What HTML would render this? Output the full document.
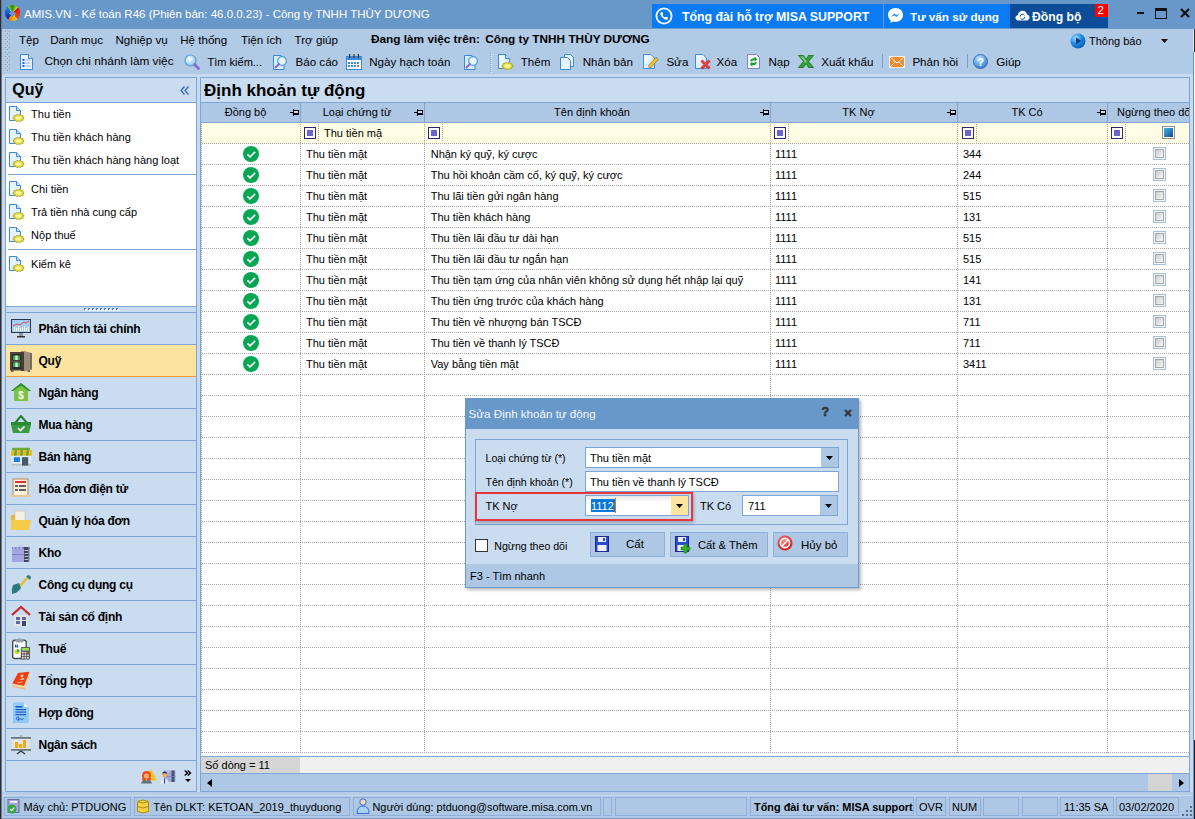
<!DOCTYPE html>
<html><head><meta charset="utf-8"><style>
html,body{margin:0;padding:0;width:1195px;height:819px;overflow:hidden;background:#b5cde7;}
body{position:relative;font-family:"Liberation Sans",sans-serif;}
.a{position:absolute;}
.t{white-space:nowrap;line-height:1;}
svg{overflow:visible;}
</style></head><body>
<div class="a" style="left:0px;top:0px;width:1195px;height:819px;background:#b5cde7"></div>
<div class="a" style="left:0px;top:0px;width:1195px;height:29px;background:#6897c9"></div>
<div class="a" style="left:0px;top:0px;width:1px;height:819px;background:#2d2d2d"></div>
<div class="a" style="left:1px;top:0px;width:1px;height:819px;background:#6a7a90"></div>
<div class="a" style="left:1193px;top:29px;width:1px;height:23px;background:#dce8f4"></div>
<div class="a" style="left:1194px;top:29px;width:1px;height:23px;background:#2d2d2d"></div>
<div class="a" style="left:1193px;top:52px;width:1px;height:767px;background:#6a90c8"></div>
<div class="a" style="left:1194px;top:52px;width:1px;height:688px;background:#f0f4f8"></div>
<div class="a" style="left:1194px;top:740px;width:1px;height:79px;background:#202030"></div>
<div class="a" style="left:4.7px;top:5.4px;width:15.6px;height:15.6px;border-radius:50%;background:conic-gradient(#1a8a20 0deg,#c8e020 45deg,#e80c0c 45deg,#e85010 140deg,#f8d010 140deg,#f07010 215deg,#0a2aa0 215deg,#2a80e0 320deg,#98d020 320deg,#1a8a20 360deg)"></div>
<div class="a" style="left:10.2px;top:10.7px;width:5px;height:5px;background:#6897c9;transform:rotate(45deg)"></div>
<div class="a t " style="left:24px;top:9.27px;font-size:11.5px;font-weight:normal;color:#fff;">AMIS.VN - Kế toán R46 (Phiên bản: 46.0.0.23) - Công ty TNHH THÙY DƯƠNG</div>
<div class="a" style="left:652px;top:4px;width:231px;height:24px;background:#0b7bf4"></div>
<div class="a" style="left:883px;top:4px;width:1px;height:24px;background:#5aa0e8"></div>
<div class="a" style="left:884px;top:4px;width:126px;height:24px;background:#0b7bf4"></div>
<div class="a" style="left:1010px;top:4px;width:98px;height:24px;background:#0b4d99"></div>
<div class="a" style="left:1095px;top:4px;width:13px;height:13px;background:#ff0000"></div>
<div class="a t " style="left:1097.5px;top:5.27px;font-size:11.5px;font-weight:normal;color:#fff;">2</div>
<svg class="a" style="left:655px;top:7px;" width="18" height="18" viewBox="0 0 18 18"><circle cx="9" cy="9" r="7.6" fill="none" stroke="#fff" stroke-width="1.8"/><path d="M6 5.2 L7.4 5 L8.3 7.2 L7.4 8 Q8.2 9.8 10 10.6 L10.8 9.7 L13 10.6 L12.8 12 Q11.5 13.2 9.5 12.2 Q6.3 10.7 5.4 7.6 Q5.2 6 6 5.2 Z" fill="#fff"/></svg>
<div class="a t " style="left:682px;top:10.59px;font-size:12.3px;font-weight:bold;color:#fff;">Tổng đài hỗ trợ MISA SUPPORT</div>
<svg class="a" style="left:887px;top:7px;" width="17" height="17" viewBox="0 0 17 17"><path d="M8.5 1 C4 1 1 4.2 1 8 C1 10.2 2 12 3.6 13.2 L3.6 16 L6.2 14.6 C7 14.8 7.7 14.9 8.5 14.9 C13 14.9 16 11.8 16 8 C16 4.2 13 1 8.5 1 Z" fill="#fff"/><path d="M3.8 10 L7.3 6.4 L9.2 8.3 L12.8 6.4 L9.3 10 L7.4 8.2 Z" fill="#0b7bf4"/></svg>
<div class="a t " style="left:910px;top:11.10px;font-size:11.7px;font-weight:bold;color:#fff;">Tư vấn sử dụng</div>
<svg class="a" style="left:1015px;top:10px;" width="15" height="11" viewBox="0 0 15 11"><path d="M3.5 10.5 C1.6 10.5 0.5 9.3 0.5 7.8 C0.5 6.4 1.5 5.3 2.9 5.2 C3.3 2.6 5.2 0.8 7.5 0.8 C9.8 0.8 11.6 2.4 12 4.6 C13.5 4.8 14.5 6 14.5 7.6 C14.5 9.2 13.3 10.5 11.6 10.5 Z" fill="#fff"/><path d="M5.3 6.5 A2.3 2.3 0 0 1 9.5 5.2 M9.7 7 A2.3 2.3 0 0 1 5.5 8.3" fill="none" stroke="#0b4d99" stroke-width="1"/></svg>
<div class="a t " style="left:1032px;top:10.67px;font-size:12.2px;font-weight:bold;color:#fff;">Đồng bộ</div>
<div class="a" style="left:1137px;top:12px;width:7px;height:2px;background:#111"></div>
<div class="a" style="left:1155px;top:8px;width:12px;height:11px;border:1.5px solid #111;border-top-width:3px;box-sizing:border-box"></div>
<svg class="a" style="left:1180px;top:8px;" width="10" height="10" viewBox="0 0 10 10"><path d="M1 1 L9 9 M9 1 L1 9" stroke="#111" stroke-width="2.2"/></svg>
<div class="a" style="left:2px;top:29px;width:1191px;height:45px;background:#b1cae6"></div>
<div class="a" style="left:1190px;top:74px;width:3px;height:721px;background:#c8daf0"></div>
<div class="a" style="left:2px;top:74px;width:1191px;height:721px;background:#c8daf0"></div>
<svg class="a" style="left:0px;top:0px;" width="12" height="80" viewBox="0 0 12 80"><rect x="5" y="31" width="1" height="1" fill="#a89a8c"/><rect x="9" y="31" width="1" height="1" fill="#a89a8c"/><rect x="7" y="33" width="1" height="1" fill="#a89a8c"/><rect x="5" y="35" width="1" height="1" fill="#a89a8c"/><rect x="9" y="35" width="1" height="1" fill="#a89a8c"/><rect x="7" y="37" width="1" height="1" fill="#a89a8c"/><rect x="5" y="39" width="1" height="1" fill="#a89a8c"/><rect x="9" y="39" width="1" height="1" fill="#a89a8c"/><rect x="7" y="41" width="1" height="1" fill="#a89a8c"/><rect x="5" y="43" width="1" height="1" fill="#a89a8c"/><rect x="9" y="43" width="1" height="1" fill="#a89a8c"/><rect x="7" y="45" width="1" height="1" fill="#a89a8c"/><rect x="5" y="47" width="1" height="1" fill="#a89a8c"/><rect x="9" y="47" width="1" height="1" fill="#a89a8c"/><rect x="7" y="49" width="1" height="1" fill="#a89a8c"/><rect x="5" y="52" width="1" height="1" fill="#a89a8c"/><rect x="9" y="52" width="1" height="1" fill="#a89a8c"/><rect x="7" y="54" width="1" height="1" fill="#a89a8c"/><rect x="5" y="56" width="1" height="1" fill="#a89a8c"/><rect x="9" y="56" width="1" height="1" fill="#a89a8c"/><rect x="7" y="58" width="1" height="1" fill="#a89a8c"/><rect x="5" y="60" width="1" height="1" fill="#a89a8c"/><rect x="9" y="60" width="1" height="1" fill="#a89a8c"/><rect x="7" y="62" width="1" height="1" fill="#a89a8c"/><rect x="5" y="64" width="1" height="1" fill="#a89a8c"/><rect x="9" y="64" width="1" height="1" fill="#a89a8c"/><rect x="7" y="66" width="1" height="1" fill="#a89a8c"/><rect x="5" y="68" width="1" height="1" fill="#a89a8c"/><rect x="9" y="68" width="1" height="1" fill="#a89a8c"/><rect x="7" y="70" width="1" height="1" fill="#a89a8c"/></svg>
<div class="a t " style="left:19px;top:34.18px;font-size:11.6px;font-weight:normal;color:#000;">Tệp</div>
<div class="a t " style="left:50.2px;top:34.18px;font-size:11.6px;font-weight:normal;color:#000;">Danh mục</div>
<div class="a t " style="left:115.5px;top:34.18px;font-size:11.6px;font-weight:normal;color:#000;">Nghiệp vụ</div>
<div class="a t " style="left:180.2px;top:34.18px;font-size:11.6px;font-weight:normal;color:#000;">Hệ thống</div>
<div class="a t " style="left:241px;top:34.18px;font-size:11.6px;font-weight:normal;color:#000;">Tiện ích</div>
<div class="a t " style="left:294.6px;top:34.18px;font-size:11.6px;font-weight:normal;color:#000;">Trợ giúp</div>
<div class="a t " style="left:371px;top:34.01px;font-size:11.8px;font-weight:bold;color:#000;">Đang làm việc trên:</div>
<div class="a t " style="left:485.2px;top:34.01px;font-size:11.8px;font-weight:bold;color:#000;">Công ty TNHH THÙY DƯƠNG</div>
<svg class="a" style="left:1070px;top:33px;" width="16" height="16" viewBox="0 0 16 16"><defs><radialGradient id="gb" cx="0.35" cy="0.3" r="0.8"><stop offset="0" stop-color="#9fdcff"/><stop offset="0.5" stop-color="#1e8ae0"/><stop offset="1" stop-color="#0a4fa8"/></radialGradient></defs><circle cx="8" cy="8" r="7.5" fill="url(#gb)"/><path d="M6 4.5 L11.5 8 L6 11.5 Z" fill="#0a3f90"/></svg>
<div class="a t " style="left:1089px;top:36.19px;font-size:11px;font-weight:normal;color:#000;">Thông báo</div>
<svg class="a" style="left:1161px;top:39px;" width="7" height="4" viewBox="0 0 7 4"><path d="M0 0 H7 L3.5 4 Z" fill="#111"/></svg>
<svg class="a" style="left:19px;top:54px;" width="15" height="16" viewBox="0 0 15 16"><path d="M1.5 0.5 H9.5 L13.5 4.5 V15.5 H1.5 Z" fill="#e8f3fc" stroke="#3a8ad8" stroke-width="1"/><path d="M9.5 0.5 V4.5 H13.5" fill="#c8e0f6" stroke="#3a8ad8" stroke-width="1"/><rect x="3.5" y="5" width="2" height="2" fill="#1a6ad0"/><rect x="3.5" y="8" width="2" height="2" fill="#1a6ad0"/><rect x="3.5" y="11" width="2" height="2" fill="#1a6ad0"/><rect x="6.5" y="5.5" width="5" height="1" fill="#8ab8e8"/><rect x="6.5" y="8.5" width="5" height="1" fill="#8ab8e8"/><rect x="6.5" y="11.5" width="5" height="1" fill="#8ab8e8"/></svg>
<div class="a t " style="left:44.4px;top:56.01px;font-size:11.8px;font-weight:normal;color:#000;">Chọn chi nhánh làm việc</div>
<svg class="a" style="left:184px;top:54px;" width="16" height="16" viewBox="0 0 16 16"><defs><radialGradient id="mg" cx="0.4" cy="0.35" r="0.7"><stop offset="0" stop-color="#ffffff"/><stop offset="1" stop-color="#7cc0f0"/></radialGradient></defs><circle cx="6.5" cy="6.5" r="5.5" fill="url(#mg)" stroke="#5aa0d8" stroke-width="1.2"/><path d="M10.5 10.5 L14.5 14.5" stroke="#8a6ad0" stroke-width="2.8" stroke-linecap="round"/></svg>
<div class="a t " style="left:207.6px;top:56.69px;font-size:11px;font-weight:normal;color:#000;letter-spacing:0px">Tìm kiếm...</div>
<svg class="a" style="left:272px;top:54px;" width="16" height="16" viewBox="0 0 16 16"><path d="M1.5 1.5 H9 L12 4.5 V15.5 H1.5 Z" fill="#d8ecfc" stroke="#3a8ad8"/><circle cx="10" cy="7" r="4.3" fill="#e8f6ff" stroke="#4a9ae0" stroke-width="1.2"/><path d="M7 10 L3.5 13.5" stroke="#8a6ad0" stroke-width="2" stroke-linecap="round"/></svg>
<div class="a t " style="left:295.5px;top:56.18px;font-size:11.6px;font-weight:normal;color:#000;">Báo cáo</div>
<svg class="a" style="left:346px;top:54px;" width="16" height="15" viewBox="0 0 16 15"><rect x="0.5" y="2.5" width="15" height="13" fill="#fff" stroke="#3a8ad8"/><rect x="0.5" y="2.5" width="15" height="3.5" fill="#3a8ad8"/><rect x="3" y="0" width="1.2" height="4" fill="#333"/><rect x="7.4" y="0" width="1.2" height="4" fill="#333"/><rect x="11.8" y="0" width="1.2" height="4" fill="#333"/><g fill="#3a8ad8"><rect x="2" y="8" width="2" height="2"/><rect x="5" y="8" width="2" height="2"/><rect x="8" y="8" width="2" height="2"/><rect x="11" y="8" width="2" height="2"/><rect x="2" y="11" width="2" height="2"/><rect x="5" y="11" width="2" height="2"/><rect x="8" y="11" width="2" height="2"/><rect x="11" y="11" width="2" height="2" fill="#e05a20"/></g></svg>
<div class="a t " style="left:369.2px;top:56.18px;font-size:11.6px;font-weight:normal;color:#000;">Ngày hạch toán</div>
<svg class="a" style="left:463px;top:54px;" width="16" height="16" viewBox="0 0 16 16"><path d="M1.5 1.5 H9 L12 4.5 V15.5 H1.5 Z" fill="#d8ecfc" stroke="#3a8ad8"/><circle cx="10" cy="7" r="4.3" fill="#e8f6ff" stroke="#4a9ae0" stroke-width="1.2"/><path d="M7 10 L3.5 13.5" stroke="#8a6ad0" stroke-width="2" stroke-linecap="round"/></svg>
<svg class="a" style="left:490px;top:53px;" width="2" height="20" viewBox="0 0 2 20"><rect x="0" y="0" width="1" height="1" fill="#a0a8b8"/><rect x="1" y="1" width="1" height="1" fill="#e8f0f8"/><rect x="0" y="2" width="1" height="1" fill="#a0a8b8"/><rect x="1" y="3" width="1" height="1" fill="#e8f0f8"/><rect x="0" y="4" width="1" height="1" fill="#a0a8b8"/><rect x="1" y="5" width="1" height="1" fill="#e8f0f8"/><rect x="0" y="6" width="1" height="1" fill="#a0a8b8"/><rect x="1" y="7" width="1" height="1" fill="#e8f0f8"/><rect x="0" y="8" width="1" height="1" fill="#a0a8b8"/><rect x="1" y="9" width="1" height="1" fill="#e8f0f8"/><rect x="0" y="10" width="1" height="1" fill="#a0a8b8"/><rect x="1" y="11" width="1" height="1" fill="#e8f0f8"/><rect x="0" y="12" width="1" height="1" fill="#a0a8b8"/><rect x="1" y="13" width="1" height="1" fill="#e8f0f8"/><rect x="0" y="14" width="1" height="1" fill="#a0a8b8"/><rect x="1" y="15" width="1" height="1" fill="#e8f0f8"/><rect x="0" y="16" width="1" height="1" fill="#a0a8b8"/><rect x="1" y="17" width="1" height="1" fill="#e8f0f8"/><rect x="0" y="18" width="1" height="1" fill="#a0a8b8"/><rect x="1" y="19" width="1" height="1" fill="#e8f0f8"/></svg>
<svg class="a" style="left:498px;top:54px;" width="17" height="16" viewBox="0 0 17 16"><path d="M0.5 0.5 H7.5 L11.5 4.5 V14.5 H0.5 Z" fill="#e6f2fc" stroke="#3a8ad8"/><path d="M7.5 0.5 V4.5 H11.5" fill="#c8e0f6" stroke="#3a8ad8"/><polygon points="15.30,12.00 13.80,12.92 14.19,14.23 12.16,14.40 11.29,15.61 9.50,14.96 7.71,15.61 6.84,14.40 4.81,14.23 5.20,12.92 3.70,12.00 5.20,11.08 4.81,9.77 6.84,9.60 7.71,8.39 9.50,9.04 11.29,8.39 12.16,9.60 14.19,9.77 13.80,11.08" fill="#e8e040" stroke="#a09020" stroke-width="0.7"/><ellipse cx="9.5" cy="12" rx="2.90" ry="1.71" fill="#f8f8a0"/></svg>
<div class="a t " style="left:520.7px;top:56.18px;font-size:11.6px;font-weight:normal;color:#000;">Thêm</div>
<svg class="a" style="left:560px;top:54px;" width="14" height="16" viewBox="0 0 14 16"><path d="M4.5 0.5 H10.5 L13.5 3.5 V12.5 H4.5 Z" fill="#e6f2fc" stroke="#3a8ad8"/><path d="M0.5 3.5 H7.5 L10.5 6.5 V15.5 H0.5 Z" fill="#e6f2fc" stroke="#3a8ad8"/></svg>
<div class="a t " style="left:582.7px;top:56.18px;font-size:11.6px;font-weight:normal;color:#000;">Nhân bản</div>
<svg class="a" style="left:643px;top:54px;" width="16" height="15" viewBox="0 0 16 15"><defs><linearGradient id="dg" x1="0" y1="0" x2="1" y2="1"><stop offset="0" stop-color="#ffffff"/><stop offset="1" stop-color="#c4e0f8"/></linearGradient></defs><path d="M0.5 0.5 H8 L11.5 4 V14.5 H0.5 Z" fill="url(#dg)" stroke="#3a90e0"/><path d="M6.3 13.8 L5.8 11.2 L12.8 3.4 L15.2 5.5 L8.2 13.3 Z" fill="#f2c434" stroke="#7a6010" stroke-width="0.6"/></svg>
<div class="a t " style="left:666.4px;top:56.18px;font-size:11.6px;font-weight:normal;color:#000;">Sửa</div>
<svg class="a" style="left:695px;top:54px;" width="16" height="16" viewBox="0 0 16 16"><path d="M0.5 0.5 H8 L11.5 4 V14.5 H0.5 Z" fill="url(#dg)" stroke="#3a90e0"/><path d="M6.5 6.5 L14.5 14.5 M14.5 6.5 L6.5 14.5" stroke="#d82828" stroke-width="2.8"/><path d="M7 6.5 L14 13.5 M14 6.5 L7 13.5" stroke="#f07878" stroke-width="0.8"/></svg>
<div class="a t " style="left:716.6px;top:56.18px;font-size:11.6px;font-weight:normal;color:#000;">Xóa</div>
<svg class="a" style="left:747px;top:54px;" width="14" height="16" viewBox="0 0 14 16"><path d="M0.5 0.5 H9.5 L12.5 3.5 V14.5 H0.5 Z" fill="#f2f6fc" stroke="#7c88c0"/><path d="M3.2 7.2 Q3.5 4.3 6.8 4.3 L7.6 4.3 L7.6 2.6 L10.2 5.3 L7.6 8 L7.6 6.3 L6.8 6.3 Q5.3 6.3 5.2 7.2 Z" fill="#18a030"/><path d="M9.8 8.2 Q9.5 11.1 6.2 11.1 L5.4 11.1 L5.4 12.8 L2.8 10.1 L5.4 7.4 L5.4 9.1 L6.2 9.1 Q7.7 9.1 7.8 8.2 Z" fill="#18a030"/></svg>
<div class="a t " style="left:768.5px;top:56.18px;font-size:11.6px;font-weight:normal;color:#000;">Nạp</div>
<svg class="a" style="left:798px;top:55px;" width="16" height="13" viewBox="0 0 16 13"><path d="M0.5 0.5 H5.5 L8 4.5 L10.5 0.5 H15.5 L10.5 6.5 L15.5 12.5 H10.5 L8 8.5 L5.5 12.5 H0.5 L5.5 6.5 Z" fill="#34a234" stroke="#1a6a1a" stroke-width="0.8"/><path d="M2.5 1.5 H5 L9 7 L7.5 8 Z" fill="#90d890" opacity="0.8"/></svg>
<div class="a t " style="left:821.2px;top:56.18px;font-size:11.6px;font-weight:normal;color:#000;">Xuất khẩu</div>
<div class="a" style="left:882px;top:54px;width:1px;height:14px;background:#7aa0d0"></div>
<svg class="a" style="left:889px;top:56px;" width="16" height="12" viewBox="0 0 16 12"><rect x="0.5" y="0.5" width="15" height="11" fill="#f58a28" stroke="#fff" stroke-width="0.8"/><path d="M0.5 0.5 L8 7 L15.5 0.5 M0.5 11.5 L6 6 M15.5 11.5 L10 6" fill="none" stroke="#fff" stroke-width="1"/></svg>
<div class="a t " style="left:912.4px;top:56.18px;font-size:11.6px;font-weight:normal;color:#000;">Phản hồi</div>
<div class="a" style="left:967px;top:54px;width:1px;height:14px;background:#7aa0d0"></div>
<svg class="a" style="left:973px;top:54px;" width="15" height="15" viewBox="0 0 15 15"><defs><radialGradient id="hg" cx="0.4" cy="0.3" r="0.8"><stop offset="0" stop-color="#c8e8ff"/><stop offset="0.6" stop-color="#5aa0e8"/><stop offset="1" stop-color="#2a6ac8"/></radialGradient></defs><circle cx="7.5" cy="7.5" r="7" fill="url(#hg)" stroke="#2a5aa8" stroke-width="0.8"/><text x="7.5" y="12" text-anchor="middle" font-family="Liberation Sans" font-weight="bold" font-size="11" fill="#fff">?</text></svg>
<div class="a t " style="left:996.3px;top:56.18px;font-size:11.6px;font-weight:normal;color:#000;">Giúp</div>
<div class="a" style="left:5px;top:77px;width:192px;height:715px;background:#cadcf0;border:1px solid #7fa5d5;box-sizing:border-box"></div>
<div class="a t " style="left:12.2px;top:81.96px;font-size:16px;font-weight:bold;color:#000;">Quỹ</div>
<svg class="a" style="left:180px;top:86px;" width="10" height="9" viewBox="0 0 10 9"><path d="M4.5 0.5 L1 4.5 L4.5 8.5 M8.5 0.5 L5 4.5 L8.5 8.5" fill="none" stroke="#3a6ab0" stroke-width="1.3"/></svg>
<div class="a" style="left:6px;top:102px;width:190px;height:204px;background:#fff;border-top:1px solid #7fa5d5;box-sizing:border-box"></div>
<svg class="a" style="left:9px;top:105.5px;" width="17" height="16" viewBox="0 0 17 16"><path d="M0.5 0.5 H7.5 L11.5 4.5 V14.5 H0.5 Z" fill="#e6f2fc" stroke="#3a8ad8"/><path d="M7.5 0.5 V4.5 H11.5" fill="#c8e0f6" stroke="#3a8ad8"/><polygon points="15.30,12.00 13.80,12.92 14.19,14.23 12.16,14.40 11.29,15.61 9.50,14.96 7.71,15.61 6.84,14.40 4.81,14.23 5.20,12.92 3.70,12.00 5.20,11.08 4.81,9.77 6.84,9.60 7.71,8.39 9.50,9.04 11.29,8.39 12.16,9.60 14.19,9.77 13.80,11.08" fill="#e8e040" stroke="#a09020" stroke-width="0.7"/><ellipse cx="9.5" cy="12" rx="2.90" ry="1.71" fill="#f8f8a0"/></svg>
<div class="a t " style="left:31.1px;top:108.69px;font-size:11px;font-weight:normal;color:#000;">Thu tiền</div>
<svg class="a" style="left:9px;top:128.5px;" width="17" height="16" viewBox="0 0 17 16"><path d="M0.5 0.5 H7.5 L11.5 4.5 V14.5 H0.5 Z" fill="#e6f2fc" stroke="#3a8ad8"/><path d="M7.5 0.5 V4.5 H11.5" fill="#c8e0f6" stroke="#3a8ad8"/><polygon points="15.30,12.00 13.80,12.92 14.19,14.23 12.16,14.40 11.29,15.61 9.50,14.96 7.71,15.61 6.84,14.40 4.81,14.23 5.20,12.92 3.70,12.00 5.20,11.08 4.81,9.77 6.84,9.60 7.71,8.39 9.50,9.04 11.29,8.39 12.16,9.60 14.19,9.77 13.80,11.08" fill="#e8e040" stroke="#a09020" stroke-width="0.7"/><ellipse cx="9.5" cy="12" rx="2.90" ry="1.71" fill="#f8f8a0"/></svg>
<div class="a t " style="left:31.1px;top:131.69px;font-size:11px;font-weight:normal;color:#000;">Thu tiền khách hàng</div>
<svg class="a" style="left:9px;top:151.5px;" width="17" height="16" viewBox="0 0 17 16"><path d="M0.5 0.5 H7.5 L11.5 4.5 V14.5 H0.5 Z" fill="#e6f2fc" stroke="#3a8ad8"/><path d="M7.5 0.5 V4.5 H11.5" fill="#c8e0f6" stroke="#3a8ad8"/><polygon points="15.30,12.00 13.80,12.92 14.19,14.23 12.16,14.40 11.29,15.61 9.50,14.96 7.71,15.61 6.84,14.40 4.81,14.23 5.20,12.92 3.70,12.00 5.20,11.08 4.81,9.77 6.84,9.60 7.71,8.39 9.50,9.04 11.29,8.39 12.16,9.60 14.19,9.77 13.80,11.08" fill="#e8e040" stroke="#a09020" stroke-width="0.7"/><ellipse cx="9.5" cy="12" rx="2.90" ry="1.71" fill="#f8f8a0"/></svg>
<div class="a t " style="left:31.1px;top:154.69px;font-size:11px;font-weight:normal;color:#000;">Thu tiền khách hàng hàng loạt</div>
<svg class="a" style="left:9px;top:180.5px;" width="17" height="16" viewBox="0 0 17 16"><path d="M0.5 0.5 H7.5 L11.5 4.5 V14.5 H0.5 Z" fill="#e6f2fc" stroke="#3a8ad8"/><path d="M7.5 0.5 V4.5 H11.5" fill="#c8e0f6" stroke="#3a8ad8"/><polygon points="15.30,12.00 13.80,12.92 14.19,14.23 12.16,14.40 11.29,15.61 9.50,14.96 7.71,15.61 6.84,14.40 4.81,14.23 5.20,12.92 3.70,12.00 5.20,11.08 4.81,9.77 6.84,9.60 7.71,8.39 9.50,9.04 11.29,8.39 12.16,9.60 14.19,9.77 13.80,11.08" fill="#e8e040" stroke="#a09020" stroke-width="0.7"/><ellipse cx="9.5" cy="12" rx="2.90" ry="1.71" fill="#f8f8a0"/></svg>
<div class="a t " style="left:31.1px;top:183.69px;font-size:11px;font-weight:normal;color:#000;">Chi tiền</div>
<svg class="a" style="left:9px;top:203.5px;" width="17" height="16" viewBox="0 0 17 16"><path d="M0.5 0.5 H7.5 L11.5 4.5 V14.5 H0.5 Z" fill="#e6f2fc" stroke="#3a8ad8"/><path d="M7.5 0.5 V4.5 H11.5" fill="#c8e0f6" stroke="#3a8ad8"/><polygon points="15.30,12.00 13.80,12.92 14.19,14.23 12.16,14.40 11.29,15.61 9.50,14.96 7.71,15.61 6.84,14.40 4.81,14.23 5.20,12.92 3.70,12.00 5.20,11.08 4.81,9.77 6.84,9.60 7.71,8.39 9.50,9.04 11.29,8.39 12.16,9.60 14.19,9.77 13.80,11.08" fill="#e8e040" stroke="#a09020" stroke-width="0.7"/><ellipse cx="9.5" cy="12" rx="2.90" ry="1.71" fill="#f8f8a0"/></svg>
<div class="a t " style="left:31.1px;top:206.69px;font-size:11px;font-weight:normal;color:#000;">Trả tiền nhà cung cấp</div>
<svg class="a" style="left:9px;top:226.5px;" width="17" height="16" viewBox="0 0 17 16"><path d="M0.5 0.5 H7.5 L11.5 4.5 V14.5 H0.5 Z" fill="#e6f2fc" stroke="#3a8ad8"/><path d="M7.5 0.5 V4.5 H11.5" fill="#c8e0f6" stroke="#3a8ad8"/><polygon points="15.30,12.00 13.80,12.92 14.19,14.23 12.16,14.40 11.29,15.61 9.50,14.96 7.71,15.61 6.84,14.40 4.81,14.23 5.20,12.92 3.70,12.00 5.20,11.08 4.81,9.77 6.84,9.60 7.71,8.39 9.50,9.04 11.29,8.39 12.16,9.60 14.19,9.77 13.80,11.08" fill="#e8e040" stroke="#a09020" stroke-width="0.7"/><ellipse cx="9.5" cy="12" rx="2.90" ry="1.71" fill="#f8f8a0"/></svg>
<div class="a t " style="left:31.1px;top:229.69px;font-size:11px;font-weight:normal;color:#000;">Nộp thuế</div>
<svg class="a" style="left:9px;top:255.5px;" width="17" height="16" viewBox="0 0 17 16"><path d="M0.5 0.5 H7.5 L11.5 4.5 V14.5 H0.5 Z" fill="#e6f2fc" stroke="#3a8ad8"/><path d="M7.5 0.5 V4.5 H11.5" fill="#c8e0f6" stroke="#3a8ad8"/><polygon points="15.30,12.00 13.80,12.92 14.19,14.23 12.16,14.40 11.29,15.61 9.50,14.96 7.71,15.61 6.84,14.40 4.81,14.23 5.20,12.92 3.70,12.00 5.20,11.08 4.81,9.77 6.84,9.60 7.71,8.39 9.50,9.04 11.29,8.39 12.16,9.60 14.19,9.77 13.80,11.08" fill="#e8e040" stroke="#a09020" stroke-width="0.7"/><ellipse cx="9.5" cy="12" rx="2.90" ry="1.71" fill="#f8f8a0"/></svg>
<div class="a t " style="left:31.1px;top:258.69px;font-size:11px;font-weight:normal;color:#000;">Kiểm kê</div>
<div class="a" style="left:8px;top:174px;width:188px;height:1px;background:#7fa5d5"></div>
<div class="a" style="left:8px;top:249px;width:188px;height:1px;background:#7fa5d5"></div>
<div class="a" style="left:6px;top:306px;width:190px;height:1px;background:#7fa5d5"></div>
<svg class="a" style="left:84px;top:308px;" width="37" height="3" viewBox="0 0 37 3"><rect x="0" y="0" width="2" height="1" fill="#4a7ec8"/><rect x="0" y="1" width="1" height="1" fill="#4a7ec8"/><rect x="1" y="1" width="2" height="2" fill="#fff"/><rect x="4" y="0" width="2" height="1" fill="#4a7ec8"/><rect x="4" y="1" width="1" height="1" fill="#4a7ec8"/><rect x="5" y="1" width="2" height="2" fill="#fff"/><rect x="8" y="0" width="2" height="1" fill="#4a7ec8"/><rect x="8" y="1" width="1" height="1" fill="#4a7ec8"/><rect x="9" y="1" width="2" height="2" fill="#fff"/><rect x="12" y="0" width="2" height="1" fill="#4a7ec8"/><rect x="12" y="1" width="1" height="1" fill="#4a7ec8"/><rect x="13" y="1" width="2" height="2" fill="#fff"/><rect x="16" y="0" width="2" height="1" fill="#4a7ec8"/><rect x="16" y="1" width="1" height="1" fill="#4a7ec8"/><rect x="17" y="1" width="2" height="2" fill="#fff"/><rect x="20" y="0" width="2" height="1" fill="#4a7ec8"/><rect x="20" y="1" width="1" height="1" fill="#4a7ec8"/><rect x="21" y="1" width="2" height="2" fill="#fff"/><rect x="24" y="0" width="2" height="1" fill="#4a7ec8"/><rect x="24" y="1" width="1" height="1" fill="#4a7ec8"/><rect x="25" y="1" width="2" height="2" fill="#fff"/><rect x="28" y="0" width="2" height="1" fill="#4a7ec8"/><rect x="28" y="1" width="1" height="1" fill="#4a7ec8"/><rect x="29" y="1" width="2" height="2" fill="#fff"/><rect x="32" y="0" width="2" height="1" fill="#4a7ec8"/><rect x="32" y="1" width="1" height="1" fill="#4a7ec8"/><rect x="33" y="1" width="2" height="2" fill="#fff"/></svg>
<div class="a" style="left:6px;top:312px;width:190px;height:1px;background:#7fa5d5"></div>
<div class="a t " style="left:38.5px;top:322.84px;font-size:12px;font-weight:bold;color:#000;letter-spacing:-0.25px">Phân tích tài chính</div>
<div class="a" style="left:6px;top:344px;width:190px;height:1px;background:#7fa5d5"></div>
<div class="a" style="left:6px;top:345px;width:190px;height:32px;background:#fce39e;border-bottom:1px solid #f59a3c;box-sizing:border-box"></div>
<div class="a t " style="left:38.5px;top:354.84px;font-size:12px;font-weight:bold;color:#000;letter-spacing:-0.25px">Quỹ</div>
<div class="a" style="left:6px;top:376px;width:190px;height:1px;background:#7fa5d5"></div>
<div class="a" style="left:6px;top:376px;width:190px;height:1px;background:#f59a3c"></div>
<div class="a t " style="left:38.5px;top:386.84px;font-size:12px;font-weight:bold;color:#000;letter-spacing:-0.25px">Ngân hàng</div>
<div class="a" style="left:6px;top:408px;width:190px;height:1px;background:#7fa5d5"></div>
<div class="a t " style="left:38.5px;top:418.84px;font-size:12px;font-weight:bold;color:#000;letter-spacing:-0.25px">Mua hàng</div>
<div class="a" style="left:6px;top:440px;width:190px;height:1px;background:#7fa5d5"></div>
<div class="a t " style="left:38.5px;top:450.84px;font-size:12px;font-weight:bold;color:#000;letter-spacing:-0.25px">Bán hàng</div>
<div class="a" style="left:6px;top:472px;width:190px;height:1px;background:#7fa5d5"></div>
<div class="a t " style="left:38.5px;top:482.84px;font-size:12px;font-weight:bold;color:#000;letter-spacing:-0.25px">Hóa đơn điện tử</div>
<div class="a" style="left:6px;top:504px;width:190px;height:1px;background:#7fa5d5"></div>
<div class="a t " style="left:38.5px;top:514.84px;font-size:12px;font-weight:bold;color:#000;letter-spacing:-0.25px">Quản lý hóa đơn</div>
<div class="a" style="left:6px;top:536px;width:190px;height:1px;background:#7fa5d5"></div>
<div class="a t " style="left:38.5px;top:546.84px;font-size:12px;font-weight:bold;color:#000;letter-spacing:-0.25px">Kho</div>
<div class="a" style="left:6px;top:568px;width:190px;height:1px;background:#7fa5d5"></div>
<div class="a t " style="left:38.5px;top:578.84px;font-size:12px;font-weight:bold;color:#000;letter-spacing:-0.25px">Công cụ dụng cụ</div>
<div class="a" style="left:6px;top:600px;width:190px;height:1px;background:#7fa5d5"></div>
<div class="a t " style="left:38.5px;top:610.84px;font-size:12px;font-weight:bold;color:#000;letter-spacing:-0.25px">Tài sản cố định</div>
<div class="a" style="left:6px;top:632px;width:190px;height:1px;background:#7fa5d5"></div>
<div class="a t " style="left:38.5px;top:642.84px;font-size:12px;font-weight:bold;color:#000;letter-spacing:-0.25px">Thuế</div>
<div class="a" style="left:6px;top:664px;width:190px;height:1px;background:#7fa5d5"></div>
<div class="a t " style="left:38.5px;top:674.84px;font-size:12px;font-weight:bold;color:#000;letter-spacing:-0.25px">Tổng hợp</div>
<div class="a" style="left:6px;top:696px;width:190px;height:1px;background:#7fa5d5"></div>
<div class="a t " style="left:38.5px;top:706.84px;font-size:12px;font-weight:bold;color:#000;letter-spacing:-0.25px">Hợp đồng</div>
<div class="a" style="left:6px;top:728px;width:190px;height:1px;background:#7fa5d5"></div>
<div class="a t " style="left:38.5px;top:738.84px;font-size:12px;font-weight:bold;color:#000;letter-spacing:-0.25px">Ngân sách</div>
<div class="a" style="left:6px;top:760px;width:190px;height:1px;background:#7fa5d5"></div>
<svg class="a" style="left:10px;top:318px;" width="22" height="22" viewBox="0 0 22 22"><rect x="1" y="1" width="20" height="14" fill="#2a3550"/><rect x="2" y="2" width="18" height="12" fill="#a6cdf5"/><g fill="#fff"><rect x="4" y="9" width="1" height="4"/><rect x="6" y="10" width="1" height="3"/><rect x="8" y="8" width="1" height="5"/><rect x="10" y="10" width="1" height="3"/><rect x="12" y="9" width="1" height="4"/><rect x="14" y="8" width="1" height="5"/><rect x="16" y="10" width="1" height="3"/><rect x="18" y="9" width="1" height="4"/></g><path d="M3 8 L7 6 L10 7 L14 4 L16 5 L19 3" fill="none" stroke="#d05050" stroke-width="1"/><rect x="9" y="15" width="4" height="3" fill="#909090"/><rect x="7" y="18" width="8" height="1.5" fill="#303030"/></svg>
<svg class="a" style="left:10px;top:350px;" width="22" height="22" viewBox="0 0 22 22"><rect x="1" y="20" width="2.5" height="2" fill="#7a6a58"/><rect x="17.5" y="20" width="2.5" height="2" fill="#7a6a58"/><rect x="0" y="2" width="12" height="18.5" fill="#4e443c"/><rect x="2" y="4" width="9" height="15" fill="#2e2824"/><rect x="2" y="10.5" width="9" height="1.5" fill="#5a5048"/><rect x="3" y="5.5" width="7" height="4.5" fill="#34a850"/><rect x="3" y="12.5" width="7" height="4.5" fill="#34a850"/><rect x="5.3" y="5.5" width="2.4" height="4.5" fill="#d8e8d8"/><rect x="5.3" y="12.5" width="2.4" height="4.5" fill="#d8e8d8"/><rect x="11" y="1.5" width="3.5" height="19.5" fill="#463c34"/><path d="M14 1 L21.5 3 L21.5 19.5 L14 21.5 Z" fill="#9c8c7a"/><rect x="20.5" y="3" width="1.2" height="16.5" fill="#5a4e44"/></svg>
<svg class="a" style="left:10px;top:382px;" width="22" height="22" viewBox="0 0 22 22"><path d="M11 1 L21 9 L18 9 L18 19 L4 19 L4 9 L1 9 Z" fill="#7cc440"/><path d="M11 1 L21 9 L19 9 L11 3.5 L3 9 L1 9 Z" fill="#2a8a3a"/><text x="11" y="17" text-anchor="middle" font-family="Liberation Sans" font-weight="bold" font-size="10" fill="#fff">$</text></svg>
<svg class="a" style="left:10px;top:414px;" width="22" height="22" viewBox="0 0 22 22"><path d="M5 9 L11 2 L17 9" fill="none" stroke="#2a7a32" stroke-width="2"/><path d="M1 8 H21 V11 L19 19 H3 L1 11 Z" fill="#3a9a40"/><rect x="1" y="8" width="20" height="3" fill="#2a8a34"/><path d="M8 14 L10.5 16.5 L14.5 12.5" fill="none" stroke="#fff" stroke-width="1.6"/></svg>
<svg class="a" style="left:10px;top:446px;" width="22" height="22" viewBox="0 0 22 22"><rect x="1.5" y="10" width="19.5" height="9.5" fill="#e6eaee"/><rect x="1.5" y="17.8" width="19.5" height="1.8" fill="#b4c0c4"/><rect x="3.8" y="11.2" width="6.2" height="4.8" fill="#1a80e8"/><rect x="12" y="11.2" width="6.2" height="8.4" fill="#46596a"/><rect x="2" y="1.8" width="18" height="2.4" rx="0.8" fill="#6aaa30"/><path d="M1.6 4 H4.0 L3.8 9.2 Q2.3 10.4 0.8 9.2 Z" fill="#f8b400"/><path d="M4.6 4 H7.0 L6.8 9.2 Q5.3 10.4 3.8 9.2 Z" fill="#64a830"/><path d="M7.6 4 H10.0 L9.8 9.2 Q8.3 10.4 6.8 9.2 Z" fill="#f8b400"/><path d="M10.6 4 H13.0 L12.8 9.2 Q11.3 10.4 9.8 9.2 Z" fill="#64a830"/><path d="M13.6 4 H16.0 L15.8 9.2 Q14.3 10.4 12.8 9.2 Z" fill="#f8b400"/><path d="M16.6 4 H19.0 L18.8 9.2 Q17.3 10.4 15.8 9.2 Z" fill="#64a830"/><path d="M19.6 4 H22.0 L21.8 9.2 Q20.3 10.4 18.8 9.2 Z" fill="#f8b400"/></svg>
<svg class="a" style="left:10px;top:478px;" width="22" height="22" viewBox="0 0 22 22"><rect x="3" y="1" width="15" height="17" fill="#fbf0dc" stroke="#b48a50" stroke-width="1"/><rect x="5" y="3" width="11" height="2" fill="#e03030"/><rect x="5" y="7" width="3" height="2" fill="#606060"/><rect x="9" y="7" width="7" height="2" fill="#606060"/><rect x="5" y="11" width="3" height="2" fill="#606060"/><rect x="9" y="11" width="7" height="2" fill="#606060"/><rect x="1" y="17" width="20" height="2" fill="#e8c898"/></svg>
<svg class="a" style="left:10px;top:510px;" width="22" height="22" viewBox="0 0 22 22"><path d="M1 5 H8 L10 3 H15 V19 H1 Z" fill="#e8b830"/><rect x="5" y="1" width="10" height="11" fill="#f4f0e4" stroke="#c8c0a8" stroke-width="0.6"/><path d="M1 10 H21 L19 20 H1 Z" fill="#f5cc48"/></svg>
<svg class="a" style="left:10px;top:542px;" width="22" height="22" viewBox="0 0 22 22"><path d="M7 5 L11 2.5 L15 5 Z" fill="#d4c8e8"/><rect x="2" y="5" width="18" height="15" fill="#a4a6e2"/><rect x="2" y="5" width="18" height="2" fill="#7c80d0"/><g fill="#e8e8f8"><rect x="3" y="5.5" width="2" height="1"/><rect x="6.5" y="5.5" width="2" height="1"/><rect x="10" y="5.5" width="2" height="1"/></g><rect x="2" y="12" width="18" height="1" fill="#7c80d0"/><rect x="14" y="5" width="4.5" height="15" fill="#3e4658"/><g fill="#b8c0d0"><rect x="14.5" y="8" width="3.5" height="1"/><rect x="14.5" y="11" width="3.5" height="1"/><rect x="14.5" y="14" width="3.5" height="1"/><rect x="14.5" y="17" width="3.5" height="1"/></g></svg>
<svg class="a" style="left:10px;top:574px;" width="22" height="22" viewBox="0 0 22 22"><path d="M9 13 L18 3" stroke="#e8c020" stroke-width="2.4"/><path d="M16 2 L20 6 L21 3 L19 1 Z" fill="#2a7a80"/><path d="M3 11 L9 9 L11 14 Q8 19 2 20 Q1 15 3 11 Z" fill="#2a7a80"/></svg>
<svg class="a" style="left:10px;top:606px;" width="22" height="22" viewBox="0 0 22 22"><path d="M2 9 L11 1 L20 9" fill="none" stroke="#c82828" stroke-width="2.2"/><rect x="4" y="9" width="14" height="11" fill="#e4e4e4"/><rect x="6" y="11" width="4" height="3" fill="#5a6aa0"/><rect x="12" y="11" width="4" height="3" fill="#5a6aa0"/><rect x="6" y="15" width="4" height="3" fill="#5a6aa0"/><rect x="12" y="15" width="4" height="5" fill="#3a4a80"/></svg>
<svg class="a" style="left:10px;top:638px;" width="22" height="22" viewBox="0 0 22 22"><rect x="2.7" y="2.2" width="13.5" height="18.3" rx="2" fill="#fff" stroke="#46505a" stroke-width="1.4"/><rect x="5.5" y="1.5" width="8" height="3" rx="1" fill="#9aa4ac"/><circle cx="9.5" cy="1.3" r="1.1" fill="#9aa4ac"/><rect x="5" y="6.5" width="1.3" height="3" fill="#1a5ad0"/><rect x="6.5" y="7.5" width="1.8" height="2" fill="#1a5ad0"/><rect x="7.3" y="6" width="0.6" height="3" fill="#1a5ad0"/><circle cx="7" cy="13.8" r="2.5" fill="#c8d828"/><path d="M7 13.8 V11.3 A2.5 2.5 0 0 1 9.5 13.8 Z" fill="#2a9a40"/><rect x="10.8" y="9" width="9.2" height="12.6" rx="1" fill="#5a5a5a"/><rect x="11.8" y="10" width="7.2" height="2.6" fill="#98e060"/><g fill="#e8e8e8"><rect x="12" y="13.8" width="1.6" height="1.6"/><rect x="14.6" y="13.8" width="1.6" height="1.6"/><rect x="12" y="16.5" width="1.6" height="1.6"/><rect x="14.6" y="16.5" width="1.6" height="1.6"/><rect x="17.2" y="16.5" width="1.6" height="1.6"/><rect x="12" y="19" width="1.6" height="1.6"/><rect x="14.6" y="19" width="1.6" height="1.6"/><rect x="17.2" y="19" width="1.6" height="1.6"/></g><rect x="17.2" y="13.8" width="1.6" height="1.6" fill="#f04040"/></svg>
<svg class="a" style="left:10px;top:670px;" width="22" height="22" viewBox="0 0 22 22"><path d="M2.3 13.5 L14 15.8 L18.8 3.5 L19.6 6.5 L15.2 19.8 L2.3 16.5 Z" fill="#f5d6a4"/><path d="M2.3 16.5 L15.2 19.8 L15.5 18.5 L2.5 15.5 Z" fill="#e0b880"/><path d="M2.3 13.5 L8 3 L19.5 1.8 L14 15.8 Z" fill="#f03c10"/><circle cx="12" cy="6" r="1.4" fill="#fcd8c8"/><path d="M9 10 L14.5 9.5 L14 8 L12 8.2 Z" fill="#fcd8c8"/><path d="M7.5 12.5 L12.5 12" stroke="#fcd8c8" stroke-width="0.8"/></svg>
<svg class="a" style="left:10px;top:702px;" width="22" height="22" viewBox="0 0 22 22"><path d="M3 0.5 H14 L18.7 5 V21 H3 Z" fill="#90c8f8"/><path d="M14 0.5 V5 H18.7 Z" fill="#e0f0ff"/><g fill="#1a5ac8"><rect x="5.5" y="4" width="7" height="1.6"/><rect x="5.5" y="7" width="10.5" height="1.2"/><rect x="5.5" y="9.5" width="10.5" height="1.2"/><rect x="5.5" y="12" width="10.5" height="1.2"/></g><path d="M7 18 Q6 14 8.5 15 Q9.5 17 8 18.5 Q10 16 11 17 Q12 18 13.5 16.5" fill="none" stroke="#1a5ac8" stroke-width="0.9"/></svg>
<svg class="a" style="left:10px;top:734px;" width="22" height="22" viewBox="0 0 22 22"><rect x="1" y="3" width="20" height="1.8" fill="#6a7a80"/><rect x="10.5" y="1" width="1" height="2" fill="#6a7a80"/><rect x="2" y="5" width="18" height="10" fill="#e0e4e4"/><rect x="5" y="8" width="3" height="6" fill="#f5a810"/><rect x="9" y="10" width="3" height="4" fill="#f5a810"/><rect x="13" y="6" width="3" height="8" fill="#f5a810"/><rect x="1" y="15" width="20" height="1.8" fill="#6a7a80"/><path d="M7 20 L11 17 L15 20" fill="none" stroke="#303030" stroke-width="1.2"/></svg>
<svg class="a" style="left:140px;top:770px;" width="17" height="14" viewBox="0 0 17 14"><path d="M7 1.5 L10 2 L12 4.5 L10 2.5 Z" fill="#f5c020"/><g fill="#f5c418"><path d="M9 0.5 H12 L13.5 4 H9.5 Z"/><path d="M10.5 4 H14 L15.5 7.5 H11.5 Z"/><path d="M11 7.5 H15.5 L16.5 10.5 H11.5 Z"/></g><circle cx="6.5" cy="5.5" r="4.5" fill="#f04818"/><path d="M2 8 Q2 11 3.5 11 L9.5 11 Q11 11 11 8 Z" fill="#f04818"/><circle cx="6.5" cy="6" r="2.6" fill="#f8b060"/><path d="M1 13.5 Q1.5 10 6.5 10 Q11.5 10 12 13.5 Z" fill="#5a7480"/><rect x="5.8" y="9" width="1.4" height="2" fill="#f8b060"/></svg>
<svg class="a" style="left:160px;top:769px;" width="16" height="15" viewBox="0 0 16 15"><path d="M10 0.5 L12 1.5 L14 0.5 Z" fill="#d8d0f0"/><rect x="4" y="1.5" width="11.5" height="11.5" fill="#a4a8e0"/><rect x="11.5" y="1.5" width="3" height="11.5" fill="#4a5468"/><g fill="#e8e8f8"><rect x="5" y="2.5" width="1.2" height="0.8"/><rect x="7.5" y="2.5" width="1.2" height="0.8"/></g><rect x="4" y="7" width="11.5" height="0.8" fill="#7c80c8"/><circle cx="4.5" cy="6" r="2.4" fill="#f4b040"/><path d="M2 5 Q2.5 2.5 4.5 2.6 Q7 2.5 7 5 L6 4.2 L3 4.2 Z" fill="#2a3040"/><path d="M0.5 14.5 Q0.5 9.5 4.5 9.5 Q8.5 9.5 8.5 14.5 Z" fill="#e4e8ec"/><rect x="4" y="9.5" width="1.1" height="5" fill="#1a40c0"/></svg>
<svg class="a" style="left:184px;top:770px;" width="8" height="13" viewBox="0 0 8 13"><path d="M0.7 0.5 L3.5 3 L0.7 5.5 M3.7 0.5 L6.5 3 L3.7 5.5" fill="none" stroke="#000" stroke-width="1.4"/><path d="M1 9 H7 L4 12 Z" fill="#000"/></svg>
<div class="a" style="left:200px;top:77px;width:990px;height:715px;background:#cadcf0;border:1px solid #7fa5d5;box-sizing:border-box"></div>
<div class="a t " style="left:204px;top:81.61px;font-size:17px;font-weight:bold;color:#000;">Định khoản tự động</div>
<div class="a" style="left:201px;top:102px;width:988px;height:21px;background:#adc7e5;border-top:1px solid #7fa5d5;border-bottom:1px solid #7fa5d5;box-sizing:border-box"></div>
<div class="a t" style="left:-54.5px;width:600px;text-align:center;top:107.19px;font-size:11px;font-weight:normal;color:#000;">Đồng bộ</div>
<svg class="a" style="left:290px;top:109px;" width="9" height="7" viewBox="0 0 9 7"><g fill="#000"><rect x="0" y="3" width="3" height="1"/><rect x="3" y="0" width="1" height="7"/><rect x="4" y="1" width="5" height="1"/><rect x="4" y="4" width="5" height="2"/><rect x="8" y="1" width="1" height="5"/></g><rect x="4" y="2" width="4" height="2" fill="#c8dcf8"/></svg>
<div class="a" style="left:300px;top:103px;width:1px;height:19px;background:#7fa5d5"></div>
<div class="a t" style="left:57.0px;width:600px;text-align:center;top:107.19px;font-size:11px;font-weight:normal;color:#000;">Loại chứng từ</div>
<svg class="a" style="left:414px;top:109px;" width="9" height="7" viewBox="0 0 9 7"><g fill="#000"><rect x="0" y="3" width="3" height="1"/><rect x="3" y="0" width="1" height="7"/><rect x="4" y="1" width="5" height="1"/><rect x="4" y="4" width="5" height="2"/><rect x="8" y="1" width="1" height="5"/></g><rect x="4" y="2" width="4" height="2" fill="#c8dcf8"/></svg>
<div class="a" style="left:424px;top:103px;width:1px;height:19px;background:#7fa5d5"></div>
<div class="a t" style="left:292.0px;width:600px;text-align:center;top:107.19px;font-size:11px;font-weight:normal;color:#000;">Tên định khoản</div>
<svg class="a" style="left:760px;top:109px;" width="9" height="7" viewBox="0 0 9 7"><g fill="#000"><rect x="0" y="3" width="3" height="1"/><rect x="3" y="0" width="1" height="7"/><rect x="4" y="1" width="5" height="1"/><rect x="4" y="4" width="5" height="2"/><rect x="8" y="1" width="1" height="5"/></g><rect x="4" y="2" width="4" height="2" fill="#c8dcf8"/></svg>
<div class="a" style="left:770px;top:103px;width:1px;height:19px;background:#7fa5d5"></div>
<div class="a t" style="left:558.5px;width:600px;text-align:center;top:107.19px;font-size:11px;font-weight:normal;color:#000;">TK Nợ</div>
<svg class="a" style="left:947px;top:109px;" width="9" height="7" viewBox="0 0 9 7"><g fill="#000"><rect x="0" y="3" width="3" height="1"/><rect x="3" y="0" width="1" height="7"/><rect x="4" y="1" width="5" height="1"/><rect x="4" y="4" width="5" height="2"/><rect x="8" y="1" width="1" height="5"/></g><rect x="4" y="2" width="4" height="2" fill="#c8dcf8"/></svg>
<div class="a" style="left:957px;top:103px;width:1px;height:19px;background:#7fa5d5"></div>
<div class="a t" style="left:727.0px;width:600px;text-align:center;top:107.19px;font-size:11px;font-weight:normal;color:#000;">TK Có</div>
<svg class="a" style="left:1097px;top:109px;" width="9" height="7" viewBox="0 0 9 7"><g fill="#000"><rect x="0" y="3" width="3" height="1"/><rect x="3" y="0" width="1" height="7"/><rect x="4" y="1" width="5" height="1"/><rect x="4" y="4" width="5" height="2"/><rect x="8" y="1" width="1" height="5"/></g><rect x="4" y="2" width="4" height="2" fill="#c8dcf8"/></svg>
<div class="a" style="left:1107px;top:103px;width:1px;height:19px;background:#7fa5d5"></div>
<div class="a" style="left:1108px;top:103px;width:81px;height:19px;overflow:hidden">
<div class="a t " style="left:9px;top:4.19px;font-size:11px;font-weight:normal;color:#000;">Ngừng theo dõi</div>
</div>
<div class="a" style="left:201px;top:123px;width:988px;height:634px;background:#fff"></div>
<div class="a" style="left:201px;top:123px;width:988px;height:21px;background:#fffde3"></div>
<svg class="a" style="left:201px;top:123px;" width="988" height="634" viewBox="0 0 988 634"><g stroke="#a6a6a6" stroke-width="1" stroke-dasharray="1 1" stroke-dashoffset="1" shape-rendering="crispEdges"><line x1="0" y1="20.5" x2="988" y2="20.5"/><line x1="0" y1="41.5" x2="988" y2="41.5"/><line x1="0" y1="62.5" x2="988" y2="62.5"/><line x1="0" y1="83.5" x2="988" y2="83.5"/><line x1="0" y1="104.5" x2="988" y2="104.5"/><line x1="0" y1="125.5" x2="988" y2="125.5"/><line x1="0" y1="146.5" x2="988" y2="146.5"/><line x1="0" y1="167.5" x2="988" y2="167.5"/><line x1="0" y1="188.5" x2="988" y2="188.5"/><line x1="0" y1="209.5" x2="988" y2="209.5"/><line x1="0" y1="230.5" x2="988" y2="230.5"/><line x1="0" y1="251.5" x2="988" y2="251.5"/><line x1="0" y1="272.5" x2="988" y2="272.5"/><line x1="0" y1="293.5" x2="988" y2="293.5"/><line x1="0" y1="314.5" x2="988" y2="314.5"/><line x1="0" y1="335.5" x2="988" y2="335.5"/><line x1="0" y1="356.5" x2="988" y2="356.5"/><line x1="0" y1="377.5" x2="988" y2="377.5"/><line x1="0" y1="398.5" x2="988" y2="398.5"/><line x1="0" y1="419.5" x2="988" y2="419.5"/><line x1="0" y1="440.5" x2="988" y2="440.5"/><line x1="0" y1="461.5" x2="988" y2="461.5"/><line x1="0" y1="482.5" x2="988" y2="482.5"/><line x1="0" y1="503.5" x2="988" y2="503.5"/><line x1="0" y1="524.5" x2="988" y2="524.5"/><line x1="0" y1="545.5" x2="988" y2="545.5"/><line x1="0" y1="566.5" x2="988" y2="566.5"/><line x1="0" y1="587.5" x2="988" y2="587.5"/><line x1="0" y1="608.5" x2="988" y2="608.5"/><line x1="0" y1="629.5" x2="988" y2="629.5"/><line x1="0.5" y1="0" x2="0.5" y2="630"/><line x1="99.5" y1="0" x2="99.5" y2="630"/><line x1="223.5" y1="0" x2="223.5" y2="630"/><line x1="569.5" y1="0" x2="569.5" y2="630"/><line x1="756.5" y1="0" x2="756.5" y2="630"/><line x1="906.5" y1="0" x2="906.5" y2="630"/></g></svg>
<div class="a" style="left:201px;top:756px;width:988px;height:1px;background:#7fa5d5"></div>
<svg class="a" style="left:304px;top:127px;" width="12" height="12" viewBox="0 0 12 12"><rect x="0.5" y="0.5" width="11" height="11" fill="#fff" stroke="#2a2a70" stroke-width="1"/><rect x="3" y="3" width="6" height="6" fill="#6a64cc"/></svg>
<svg class="a" style="left:318px;top:124px;" width="1" height="18" viewBox="0 0 1 18"><line x1="0.5" y1="0" x2="0.5" y2="18" stroke="#a6a6a6" stroke-dasharray="1 1" shape-rendering="crispEdges"/></svg>
<svg class="a" style="left:428px;top:127px;" width="12" height="12" viewBox="0 0 12 12"><rect x="0.5" y="0.5" width="11" height="11" fill="#fff" stroke="#2a2a70" stroke-width="1"/><rect x="3" y="3" width="6" height="6" fill="#6a64cc"/></svg>
<svg class="a" style="left:442px;top:124px;" width="1" height="18" viewBox="0 0 1 18"><line x1="0.5" y1="0" x2="0.5" y2="18" stroke="#a6a6a6" stroke-dasharray="1 1" shape-rendering="crispEdges"/></svg>
<svg class="a" style="left:774px;top:127px;" width="12" height="12" viewBox="0 0 12 12"><rect x="0.5" y="0.5" width="11" height="11" fill="#fff" stroke="#2a2a70" stroke-width="1"/><rect x="3" y="3" width="6" height="6" fill="#6a64cc"/></svg>
<svg class="a" style="left:788px;top:124px;" width="1" height="18" viewBox="0 0 1 18"><line x1="0.5" y1="0" x2="0.5" y2="18" stroke="#a6a6a6" stroke-dasharray="1 1" shape-rendering="crispEdges"/></svg>
<svg class="a" style="left:962px;top:127px;" width="12" height="12" viewBox="0 0 12 12"><rect x="0.5" y="0.5" width="11" height="11" fill="#fff" stroke="#2a2a70" stroke-width="1"/><rect x="3" y="3" width="6" height="6" fill="#6a64cc"/></svg>
<svg class="a" style="left:976px;top:124px;" width="1" height="18" viewBox="0 0 1 18"><line x1="0.5" y1="0" x2="0.5" y2="18" stroke="#a6a6a6" stroke-dasharray="1 1" shape-rendering="crispEdges"/></svg>
<svg class="a" style="left:1111px;top:127px;" width="12" height="12" viewBox="0 0 12 12"><rect x="0.5" y="0.5" width="11" height="11" fill="#fff" stroke="#2a2a70" stroke-width="1"/><rect x="3" y="3" width="6" height="6" fill="#6a64cc"/></svg>
<svg class="a" style="left:1125px;top:124px;" width="1" height="18" viewBox="0 0 1 18"><line x1="0.5" y1="0" x2="0.5" y2="18" stroke="#a6a6a6" stroke-dasharray="1 1" shape-rendering="crispEdges"/></svg>
<div class="a t " style="left:324px;top:127.69px;font-size:11px;font-weight:normal;color:#000;">Thu tiền mặ</div>
<svg class="a" style="left:1162px;top:126px;" width="13" height="13" viewBox="0 0 13 13"><defs><linearGradient id="cbb" x1="0" y1="0" x2="1" y2="1"><stop offset="0" stop-color="#4ab8e8"/><stop offset="1" stop-color="#0a4a90"/></linearGradient></defs><rect x="0.5" y="0.5" width="12" height="12" fill="#fff" stroke="#909090"/><rect x="2" y="2" width="9" height="9" fill="url(#cbb)"/></svg>
<svg class="a" style="left:243px;top:146px;" width="16" height="16" viewBox="0 0 16 16"><circle cx="8" cy="8" r="8" fill="#04a553"/><path d="M4.4 8.4 L7 10.8 L12.2 5.8" fill="none" stroke="#fff" stroke-width="1.6"/></svg>
<div class="a t " style="left:306px;top:148.69px;font-size:11px;font-weight:normal;color:#000;">Thu tiền mặt</div>
<div class="a t " style="left:430.7px;top:148.69px;font-size:11px;font-weight:normal;color:#000;">Nhận ký quỹ, ký cược</div>
<div class="a t " style="left:775px;top:148.69px;font-size:11px;font-weight:normal;color:#000;">1111</div>
<div class="a t " style="left:963px;top:148.69px;font-size:11px;font-weight:normal;color:#000;">344</div>
<svg class="a" style="left:1153px;top:147px;" width="13" height="13" viewBox="0 0 13 13"><defs><linearGradient id="cbg" x1="0" y1="0" x2="1" y2="1"><stop offset="0" stop-color="#c8c8c8"/><stop offset="1" stop-color="#fcfcfc"/></linearGradient></defs><rect x="0.5" y="0.5" width="12" height="12" fill="#f4f6fa" stroke="#a8c0e0"/><rect x="2.5" y="2.5" width="8" height="8" fill="url(#cbg)" stroke="#a8a8a8" stroke-width="1"/></svg>
<svg class="a" style="left:243px;top:167px;" width="16" height="16" viewBox="0 0 16 16"><circle cx="8" cy="8" r="8" fill="#04a553"/><path d="M4.4 8.4 L7 10.8 L12.2 5.8" fill="none" stroke="#fff" stroke-width="1.6"/></svg>
<div class="a t " style="left:306px;top:169.69px;font-size:11px;font-weight:normal;color:#000;">Thu tiền mặt</div>
<div class="a t " style="left:430.7px;top:169.69px;font-size:11px;font-weight:normal;color:#000;">Thu hồi khoản cầm cố, ký quỹ, ký cược</div>
<div class="a t " style="left:775px;top:169.69px;font-size:11px;font-weight:normal;color:#000;">1111</div>
<div class="a t " style="left:963px;top:169.69px;font-size:11px;font-weight:normal;color:#000;">244</div>
<svg class="a" style="left:1153px;top:168px;" width="13" height="13" viewBox="0 0 13 13"><defs><linearGradient id="cbg" x1="0" y1="0" x2="1" y2="1"><stop offset="0" stop-color="#c8c8c8"/><stop offset="1" stop-color="#fcfcfc"/></linearGradient></defs><rect x="0.5" y="0.5" width="12" height="12" fill="#f4f6fa" stroke="#a8c0e0"/><rect x="2.5" y="2.5" width="8" height="8" fill="url(#cbg)" stroke="#a8a8a8" stroke-width="1"/></svg>
<svg class="a" style="left:243px;top:188px;" width="16" height="16" viewBox="0 0 16 16"><circle cx="8" cy="8" r="8" fill="#04a553"/><path d="M4.4 8.4 L7 10.8 L12.2 5.8" fill="none" stroke="#fff" stroke-width="1.6"/></svg>
<div class="a t " style="left:306px;top:190.69px;font-size:11px;font-weight:normal;color:#000;">Thu tiền mặt</div>
<div class="a t " style="left:430.7px;top:190.69px;font-size:11px;font-weight:normal;color:#000;">Thu lãi tiền gửi ngân hàng</div>
<div class="a t " style="left:775px;top:190.69px;font-size:11px;font-weight:normal;color:#000;">1111</div>
<div class="a t " style="left:963px;top:190.69px;font-size:11px;font-weight:normal;color:#000;">515</div>
<svg class="a" style="left:1153px;top:189px;" width="13" height="13" viewBox="0 0 13 13"><defs><linearGradient id="cbg" x1="0" y1="0" x2="1" y2="1"><stop offset="0" stop-color="#c8c8c8"/><stop offset="1" stop-color="#fcfcfc"/></linearGradient></defs><rect x="0.5" y="0.5" width="12" height="12" fill="#f4f6fa" stroke="#a8c0e0"/><rect x="2.5" y="2.5" width="8" height="8" fill="url(#cbg)" stroke="#a8a8a8" stroke-width="1"/></svg>
<svg class="a" style="left:243px;top:209px;" width="16" height="16" viewBox="0 0 16 16"><circle cx="8" cy="8" r="8" fill="#04a553"/><path d="M4.4 8.4 L7 10.8 L12.2 5.8" fill="none" stroke="#fff" stroke-width="1.6"/></svg>
<div class="a t " style="left:306px;top:211.69px;font-size:11px;font-weight:normal;color:#000;">Thu tiền mặt</div>
<div class="a t " style="left:430.7px;top:211.69px;font-size:11px;font-weight:normal;color:#000;">Thu tiền khách hàng</div>
<div class="a t " style="left:775px;top:211.69px;font-size:11px;font-weight:normal;color:#000;">1111</div>
<div class="a t " style="left:963px;top:211.69px;font-size:11px;font-weight:normal;color:#000;">131</div>
<svg class="a" style="left:1153px;top:210px;" width="13" height="13" viewBox="0 0 13 13"><defs><linearGradient id="cbg" x1="0" y1="0" x2="1" y2="1"><stop offset="0" stop-color="#c8c8c8"/><stop offset="1" stop-color="#fcfcfc"/></linearGradient></defs><rect x="0.5" y="0.5" width="12" height="12" fill="#f4f6fa" stroke="#a8c0e0"/><rect x="2.5" y="2.5" width="8" height="8" fill="url(#cbg)" stroke="#a8a8a8" stroke-width="1"/></svg>
<svg class="a" style="left:243px;top:230px;" width="16" height="16" viewBox="0 0 16 16"><circle cx="8" cy="8" r="8" fill="#04a553"/><path d="M4.4 8.4 L7 10.8 L12.2 5.8" fill="none" stroke="#fff" stroke-width="1.6"/></svg>
<div class="a t " style="left:306px;top:232.69px;font-size:11px;font-weight:normal;color:#000;">Thu tiền mặt</div>
<div class="a t " style="left:430.7px;top:232.69px;font-size:11px;font-weight:normal;color:#000;">Thu tiền lãi đầu tư dài hạn</div>
<div class="a t " style="left:775px;top:232.69px;font-size:11px;font-weight:normal;color:#000;">1111</div>
<div class="a t " style="left:963px;top:232.69px;font-size:11px;font-weight:normal;color:#000;">515</div>
<svg class="a" style="left:1153px;top:231px;" width="13" height="13" viewBox="0 0 13 13"><defs><linearGradient id="cbg" x1="0" y1="0" x2="1" y2="1"><stop offset="0" stop-color="#c8c8c8"/><stop offset="1" stop-color="#fcfcfc"/></linearGradient></defs><rect x="0.5" y="0.5" width="12" height="12" fill="#f4f6fa" stroke="#a8c0e0"/><rect x="2.5" y="2.5" width="8" height="8" fill="url(#cbg)" stroke="#a8a8a8" stroke-width="1"/></svg>
<svg class="a" style="left:243px;top:251px;" width="16" height="16" viewBox="0 0 16 16"><circle cx="8" cy="8" r="8" fill="#04a553"/><path d="M4.4 8.4 L7 10.8 L12.2 5.8" fill="none" stroke="#fff" stroke-width="1.6"/></svg>
<div class="a t " style="left:306px;top:253.69px;font-size:11px;font-weight:normal;color:#000;">Thu tiền mặt</div>
<div class="a t " style="left:430.7px;top:253.69px;font-size:11px;font-weight:normal;color:#000;">Thu tiền lãi đầu tư ngắn hạn</div>
<div class="a t " style="left:775px;top:253.69px;font-size:11px;font-weight:normal;color:#000;">1111</div>
<div class="a t " style="left:963px;top:253.69px;font-size:11px;font-weight:normal;color:#000;">515</div>
<svg class="a" style="left:1153px;top:252px;" width="13" height="13" viewBox="0 0 13 13"><defs><linearGradient id="cbg" x1="0" y1="0" x2="1" y2="1"><stop offset="0" stop-color="#c8c8c8"/><stop offset="1" stop-color="#fcfcfc"/></linearGradient></defs><rect x="0.5" y="0.5" width="12" height="12" fill="#f4f6fa" stroke="#a8c0e0"/><rect x="2.5" y="2.5" width="8" height="8" fill="url(#cbg)" stroke="#a8a8a8" stroke-width="1"/></svg>
<svg class="a" style="left:243px;top:272px;" width="16" height="16" viewBox="0 0 16 16"><circle cx="8" cy="8" r="8" fill="#04a553"/><path d="M4.4 8.4 L7 10.8 L12.2 5.8" fill="none" stroke="#fff" stroke-width="1.6"/></svg>
<div class="a t " style="left:306px;top:274.69px;font-size:11px;font-weight:normal;color:#000;">Thu tiền mặt</div>
<div class="a t " style="left:430.7px;top:274.69px;font-size:11px;font-weight:normal;color:#000;">Thu tiền tạm ứng của nhân viên không sử dụng hết nhập lại quỹ</div>
<div class="a t " style="left:775px;top:274.69px;font-size:11px;font-weight:normal;color:#000;">1111</div>
<div class="a t " style="left:963px;top:274.69px;font-size:11px;font-weight:normal;color:#000;">141</div>
<svg class="a" style="left:1153px;top:273px;" width="13" height="13" viewBox="0 0 13 13"><defs><linearGradient id="cbg" x1="0" y1="0" x2="1" y2="1"><stop offset="0" stop-color="#c8c8c8"/><stop offset="1" stop-color="#fcfcfc"/></linearGradient></defs><rect x="0.5" y="0.5" width="12" height="12" fill="#f4f6fa" stroke="#a8c0e0"/><rect x="2.5" y="2.5" width="8" height="8" fill="url(#cbg)" stroke="#a8a8a8" stroke-width="1"/></svg>
<svg class="a" style="left:243px;top:293px;" width="16" height="16" viewBox="0 0 16 16"><circle cx="8" cy="8" r="8" fill="#04a553"/><path d="M4.4 8.4 L7 10.8 L12.2 5.8" fill="none" stroke="#fff" stroke-width="1.6"/></svg>
<div class="a t " style="left:306px;top:295.69px;font-size:11px;font-weight:normal;color:#000;">Thu tiền mặt</div>
<div class="a t " style="left:430.7px;top:295.69px;font-size:11px;font-weight:normal;color:#000;">Thu tiền ứng trước của khách hàng</div>
<div class="a t " style="left:775px;top:295.69px;font-size:11px;font-weight:normal;color:#000;">1111</div>
<div class="a t " style="left:963px;top:295.69px;font-size:11px;font-weight:normal;color:#000;">131</div>
<svg class="a" style="left:1153px;top:294px;" width="13" height="13" viewBox="0 0 13 13"><defs><linearGradient id="cbg" x1="0" y1="0" x2="1" y2="1"><stop offset="0" stop-color="#c8c8c8"/><stop offset="1" stop-color="#fcfcfc"/></linearGradient></defs><rect x="0.5" y="0.5" width="12" height="12" fill="#f4f6fa" stroke="#a8c0e0"/><rect x="2.5" y="2.5" width="8" height="8" fill="url(#cbg)" stroke="#a8a8a8" stroke-width="1"/></svg>
<svg class="a" style="left:243px;top:314px;" width="16" height="16" viewBox="0 0 16 16"><circle cx="8" cy="8" r="8" fill="#04a553"/><path d="M4.4 8.4 L7 10.8 L12.2 5.8" fill="none" stroke="#fff" stroke-width="1.6"/></svg>
<div class="a t " style="left:306px;top:316.69px;font-size:11px;font-weight:normal;color:#000;">Thu tiền mặt</div>
<div class="a t " style="left:430.7px;top:316.69px;font-size:11px;font-weight:normal;color:#000;">Thu tiền về nhượng bán TSCĐ</div>
<div class="a t " style="left:775px;top:316.69px;font-size:11px;font-weight:normal;color:#000;">1111</div>
<div class="a t " style="left:963px;top:316.69px;font-size:11px;font-weight:normal;color:#000;">711</div>
<svg class="a" style="left:1153px;top:315px;" width="13" height="13" viewBox="0 0 13 13"><defs><linearGradient id="cbg" x1="0" y1="0" x2="1" y2="1"><stop offset="0" stop-color="#c8c8c8"/><stop offset="1" stop-color="#fcfcfc"/></linearGradient></defs><rect x="0.5" y="0.5" width="12" height="12" fill="#f4f6fa" stroke="#a8c0e0"/><rect x="2.5" y="2.5" width="8" height="8" fill="url(#cbg)" stroke="#a8a8a8" stroke-width="1"/></svg>
<svg class="a" style="left:243px;top:335px;" width="16" height="16" viewBox="0 0 16 16"><circle cx="8" cy="8" r="8" fill="#04a553"/><path d="M4.4 8.4 L7 10.8 L12.2 5.8" fill="none" stroke="#fff" stroke-width="1.6"/></svg>
<div class="a t " style="left:306px;top:337.69px;font-size:11px;font-weight:normal;color:#000;">Thu tiền mặt</div>
<div class="a t " style="left:430.7px;top:337.69px;font-size:11px;font-weight:normal;color:#000;">Thu tiền về thanh lý TSCĐ</div>
<div class="a t " style="left:775px;top:337.69px;font-size:11px;font-weight:normal;color:#000;">1111</div>
<div class="a t " style="left:963px;top:337.69px;font-size:11px;font-weight:normal;color:#000;">711</div>
<svg class="a" style="left:1153px;top:336px;" width="13" height="13" viewBox="0 0 13 13"><defs><linearGradient id="cbg" x1="0" y1="0" x2="1" y2="1"><stop offset="0" stop-color="#c8c8c8"/><stop offset="1" stop-color="#fcfcfc"/></linearGradient></defs><rect x="0.5" y="0.5" width="12" height="12" fill="#f4f6fa" stroke="#a8c0e0"/><rect x="2.5" y="2.5" width="8" height="8" fill="url(#cbg)" stroke="#a8a8a8" stroke-width="1"/></svg>
<svg class="a" style="left:243px;top:356px;" width="16" height="16" viewBox="0 0 16 16"><circle cx="8" cy="8" r="8" fill="#04a553"/><path d="M4.4 8.4 L7 10.8 L12.2 5.8" fill="none" stroke="#fff" stroke-width="1.6"/></svg>
<div class="a t " style="left:306px;top:358.69px;font-size:11px;font-weight:normal;color:#000;">Thu tiền mặt</div>
<div class="a t " style="left:430.7px;top:358.69px;font-size:11px;font-weight:normal;color:#000;">Vay bằng tiền mặt</div>
<div class="a t " style="left:775px;top:358.69px;font-size:11px;font-weight:normal;color:#000;">1111</div>
<div class="a t " style="left:963px;top:358.69px;font-size:11px;font-weight:normal;color:#000;">3411</div>
<svg class="a" style="left:1153px;top:357px;" width="13" height="13" viewBox="0 0 13 13"><defs><linearGradient id="cbg" x1="0" y1="0" x2="1" y2="1"><stop offset="0" stop-color="#c8c8c8"/><stop offset="1" stop-color="#fcfcfc"/></linearGradient></defs><rect x="0.5" y="0.5" width="12" height="12" fill="#f4f6fa" stroke="#a8c0e0"/><rect x="2.5" y="2.5" width="8" height="8" fill="url(#cbg)" stroke="#a8a8a8" stroke-width="1"/></svg>
<div class="a" style="left:201px;top:757px;width:988px;height:16px;background:#f0f0f0"></div>
<div class="a" style="left:201px;top:757px;width:99px;height:16px;background:#d6d6d6"></div>
<div class="a t " style="left:205px;top:759.69px;font-size:11px;font-weight:normal;color:#000;">Số dòng = 11</div>
<div class="a" style="left:201px;top:773px;width:988px;height:18px;background:#adc7e5;border-top:1px solid #7fa5d5;box-sizing:border-box"></div>
<svg class="a" style="left:207px;top:779px;" width="5" height="8" viewBox="0 0 5 8"><path d="M5 0 V8 L0 4 Z" fill="#000"/></svg>
<div class="a" style="left:1148px;top:774px;width:24px;height:17px;background:#d4d4d4"></div>
<svg class="a" style="left:1179px;top:779px;" width="5" height="8" viewBox="0 0 5 8"><path d="M0 0 V8 L5 4 Z" fill="#000"/></svg>
<div class="a" style="left:465px;top:398px;width:394px;height:190px;background:#cadcf0;border:1px solid #6c98cc;box-sizing:border-box;box-shadow:2px 2px 3px rgba(0,0,0,0.28)"></div>
<div class="a" style="left:465px;top:398px;width:394px;height:31px;background:#6897c9"></div>
<div class="a t " style="left:468.6px;top:408.18px;font-size:11.6px;font-weight:normal;color:#f4f8ff;">Sửa Định khoản tự động</div>
<div class="a t " style="left:821.5px;top:406.42px;font-size:12.5px;font-weight:bold;color:#333;-webkit-text-stroke:0.6px #333">?</div>
<svg class="a" style="left:844px;top:409px;" width="8" height="8" viewBox="0 0 8 8"><path d="M1 1 L7 7 M7 1 L1 7" stroke="#333" stroke-width="2"/></svg>
<div class="a" style="left:475px;top:439px;width:373px;height:86px;border:1px solid #7fa5d5;box-sizing:border-box"></div>
<div class="a t " style="left:485.5px;top:453.03px;font-size:10.6px;font-weight:normal;color:#000;">Loại chứng từ (*)</div>
<div class="a" style="left:585px;top:447px;width:254px;height:21px;background:#fff;border:1px solid #7fa5d5;box-sizing:border-box"></div>
<div class="a" style="left:821px;top:448px;width:17px;height:19px;background:#adc7e5"></div>
<svg class="a" style="left:826px;top:456px;" width="7" height="4" viewBox="0 0 7 4"><path d="M0 0 H7 L3.5 4 Z" fill="#000"/></svg>
<div class="a t " style="left:590px;top:452.69px;font-size:11px;font-weight:normal;color:#000;">Thu tiền mặt</div>
<div class="a t " style="left:485.5px;top:477.03px;font-size:10.6px;font-weight:normal;color:#000;">Tên định khoản (*)</div>
<div class="a" style="left:585px;top:471px;width:254px;height:21px;background:#fff;border:1px solid #7fa5d5;box-sizing:border-box"></div>
<div class="a t " style="left:590px;top:476.69px;font-size:11px;font-weight:normal;color:#000;">Thu tiền về thanh lý TSCĐ</div>
<div class="a" style="left:475px;top:492px;width:218px;height:29px;border:2px solid #e8363c;box-sizing:border-box;box-shadow:1px 2px 3px rgba(0,0,0,0.25)"></div>
<div class="a t " style="left:485.5px;top:500.69px;font-size:11px;font-weight:normal;color:#000;">TK Nợ</div>
<div class="a" style="left:585px;top:495px;width:104px;height:21px;background:#fff;border:1px solid #7fa5d5;box-sizing:border-box"></div>
<div class="a" style="left:671px;top:496px;width:17px;height:19px;background:#fbe3a0"></div>
<svg class="a" style="left:676px;top:504px;" width="7" height="4" viewBox="0 0 7 4"><path d="M0 0 H7 L3.5 4 Z" fill="#000"/></svg>
<div class="a" style="left:586px;top:496px;width:85px;height:6px;background:linear-gradient(rgba(0,0,0,0.10),rgba(0,0,0,0))"></div>
<div class="a" style="left:591px;top:499px;width:24px;height:13px;background:#0a78d8"></div>
<div class="a t " style="left:591px;top:500.69px;font-size:11px;font-weight:normal;color:#fff;">1112</div>
<div class="a" style="left:615px;top:498px;width:1px;height:15px;background:#e87020"></div>
<div class="a t " style="left:700px;top:500.69px;font-size:11px;font-weight:normal;color:#000;">TK Có</div>
<div class="a" style="left:742px;top:495px;width:96px;height:21px;background:#fff;border:1px solid #7fa5d5;box-sizing:border-box"></div>
<div class="a" style="left:820px;top:496px;width:17px;height:19px;background:#adc7e5"></div>
<svg class="a" style="left:825px;top:504px;" width="7" height="4" viewBox="0 0 7 4"><path d="M0 0 H7 L3.5 4 Z" fill="#000"/></svg>
<div class="a t " style="left:748px;top:500.69px;font-size:11px;font-weight:normal;color:#000;">711</div>
<div class="a" style="left:475px;top:539px;width:13px;height:13px;background:#fff;border:1px solid #333;box-sizing:border-box"></div>
<div class="a t " style="left:494.3px;top:541.03px;font-size:10.6px;font-weight:normal;color:#000;">Ngừng theo dõi</div>
<div class="a" style="left:590px;top:532px;width:75px;height:25px;background:#adc7e5;border:1px solid #8fb0da;box-sizing:border-box"></div>
<div class="a" style="left:670px;top:532px;width:98px;height:25px;background:#adc7e5;border:1px solid #8fb0da;box-sizing:border-box"></div>
<div class="a" style="left:773px;top:532px;width:75px;height:25px;background:#adc7e5;border:1px solid #8fb0da;box-sizing:border-box"></div>
<svg class="a" style="left:595px;top:536px;" width="14" height="16" viewBox="0 0 14 16"><rect x="0.5" y="0.5" width="13" height="15" fill="#2a4ad0" stroke="#1a2a90"/><rect x="3" y="1" width="8" height="5" fill="#e8eef8"/><rect x="8" y="2" width="2" height="3" fill="#2a4ad0"/><rect x="2.5" y="9" width="9" height="6" fill="#f0f0f0"/></svg>
<div class="a t " style="left:626px;top:539.27px;font-size:11.5px;font-weight:normal;color:#000;">Cất</div>
<svg class="a" style="left:675px;top:536px;" width="16" height="16" viewBox="0 0 16 16"><rect x="0.5" y="0.5" width="13" height="15" fill="#2a4ad0" stroke="#1a2a90"/><rect x="3" y="1" width="8" height="5" fill="#e8eef8"/><rect x="8" y="2" width="2" height="3" fill="#2a4ad0"/><rect x="2.5" y="9" width="9" height="6" fill="#f0f0f0"/><path d="M9 8 H12 V11 H15 V14 H12 V17 H9 V14 H6 V11 H9 Z" fill="#30b030" stroke="#1a7a1a" stroke-width="0.6"/></svg>
<div class="a t " style="left:698px;top:539.52px;font-size:11.2px;font-weight:normal;color:#000;">Cất &amp; Thêm</div>
<svg class="a" style="left:777px;top:535px;" width="16" height="16" viewBox="0 0 16 16"><defs><radialGradient id="rg" cx="0.4" cy="0.35" r="0.7"><stop offset="0" stop-color="#ff8080"/><stop offset="1" stop-color="#c81818"/></radialGradient></defs><circle cx="8" cy="8" r="7.5" fill="url(#rg)"/><circle cx="8" cy="8" r="4.6" fill="none" stroke="#fff" stroke-width="1.6"/><path d="M4.8 11.2 L11.2 4.8" stroke="#fff" stroke-width="1.6"/></svg>
<div class="a t " style="left:801px;top:540.27px;font-size:11.5px;font-weight:normal;color:#000;">Hủy bỏ</div>
<div class="a" style="left:466px;top:564px;width:392px;height:23px;background:#adc7e5"></div>
<div class="a t " style="left:470px;top:570.69px;font-size:11px;font-weight:normal;color:#000;">F3 - Tìm nhanh</div>
<div class="a" style="left:2px;top:792px;width:1191px;height:27px;background:#b5cde7"></div>
<div class="a" style="left:2px;top:795px;width:1191px;height:24px;background:#adc7e5;border-top:1px solid #c8daf0;box-sizing:border-box"></div>
<div class="a" style="left:4px;top:797px;width:127px;height:19px;border:1px solid #8fb0da;box-sizing:border-box"></div>
<div class="a" style="left:134px;top:797px;width:216px;height:19px;border:1px solid #8fb0da;box-sizing:border-box"></div>
<div class="a" style="left:353px;top:797px;width:248px;height:19px;border:1px solid #8fb0da;box-sizing:border-box"></div>
<div class="a" style="left:603px;top:797px;width:9px;height:19px;border:1px solid #8fb0da;box-sizing:border-box"></div>
<div class="a" style="left:615px;top:797px;width:132px;height:19px;border:1px solid #8fb0da;box-sizing:border-box"></div>
<div class="a" style="left:750px;top:797px;width:164px;height:19px;border:1px solid #8fb0da;box-sizing:border-box"></div>
<div class="a" style="left:916px;top:797px;width:30px;height:19px;border:1px solid #8fb0da;box-sizing:border-box"></div>
<div class="a" style="left:949px;top:797px;width:32px;height:19px;border:1px solid #8fb0da;box-sizing:border-box"></div>
<div class="a" style="left:983px;top:797px;width:36px;height:19px;border:1px solid #8fb0da;box-sizing:border-box"></div>
<div class="a" style="left:1022px;top:797px;width:36px;height:19px;border:1px solid #8fb0da;box-sizing:border-box"></div>
<div class="a" style="left:1060px;top:797px;width:54px;height:19px;border:1px solid #8fb0da;box-sizing:border-box"></div>
<div class="a" style="left:1116px;top:797px;width:63px;height:19px;border:1px solid #8fb0da;box-sizing:border-box"></div>
<svg class="a" style="left:7px;top:799px;" width="13" height="15" viewBox="0 0 13 15"><rect x="1" y="0.5" width="11" height="13" fill="#a8a8d8" stroke="#6a6aa8"/><rect x="3" y="2" width="7" height="1.5" fill="#fff"/><circle cx="5" cy="10" r="4.5" fill="#30a840"/><path d="M3 10 L4.6 11.6 L7.3 8.6" fill="none" stroke="#fff" stroke-width="1.3"/></svg>
<div class="a t " style="left:23.6px;top:801.69px;font-size:11px;font-weight:normal;color:#000;">Máy chủ: PTDUONG</div>
<svg class="a" style="left:137px;top:799px;" width="12" height="15" viewBox="0 0 12 15"><path d="M0.5 2.5 Q6 -0.5 11.5 2.5 V12.5 Q6 15.5 0.5 12.5 Z" fill="#f5d040" stroke="#b08a10"/><path d="M0.5 2.5 Q6 5.5 11.5 2.5 M0.5 7.5 Q6 10.5 11.5 7.5" fill="none" stroke="#b08a10"/></svg>
<div class="a t " style="left:153.2px;top:801.69px;font-size:11px;font-weight:normal;color:#000;">Tên DLKT: KETOAN_2019_thuyduong</div>
<svg class="a" style="left:356px;top:798px;" width="14" height="16" viewBox="0 0 14 16"><circle cx="7" cy="4" r="3.2" fill="#f8d8b0" stroke="#3a6ad0" stroke-width="1"/><path d="M1 15.5 Q1 8 7 8 Q13 8 13 15.5 Z" fill="#a8d0f8" stroke="#3a6ad0" stroke-width="1"/></svg>
<div class="a t " style="left:372.5px;top:801.77px;font-size:10.9px;font-weight:normal;color:#000;">Người dùng: ptduong@software.misa.com.vn</div>
<div class="a t " style="left:754px;top:801.77px;font-size:10.9px;font-weight:bold;color:#000;">Tổng đài tư vấn: MISA support</div>
<div class="a t " style="left:919px;top:801.69px;font-size:11px;font-weight:normal;color:#000;">OVR</div>
<div class="a t " style="left:952px;top:801.69px;font-size:11px;font-weight:normal;color:#000;">NUM</div>
<div class="a t " style="left:1064px;top:801.69px;font-size:11px;font-weight:normal;color:#000;">11:35 SA</div>
<div class="a t " style="left:1119px;top:801.69px;font-size:11px;font-weight:normal;color:#000;">03/02/2020</div>
<div class="a" style="left:2px;top:818px;width:1191px;height:1px;background:#7a9cc8"></div>
<svg class="a" style="left:1182px;top:806px;" width="10" height="10" viewBox="0 0 10 10"><rect x="8" y="0" width="2" height="2" fill="#5a6a80"/><rect x="4" y="4" width="2" height="2" fill="#5a6a80"/><rect x="8" y="4" width="2" height="2" fill="#5a6a80"/><rect x="0" y="8" width="2" height="2" fill="#5a6a80"/><rect x="4" y="8" width="2" height="2" fill="#5a6a80"/><rect x="8" y="8" width="2" height="2" fill="#5a6a80"/></svg>
</body></html>
